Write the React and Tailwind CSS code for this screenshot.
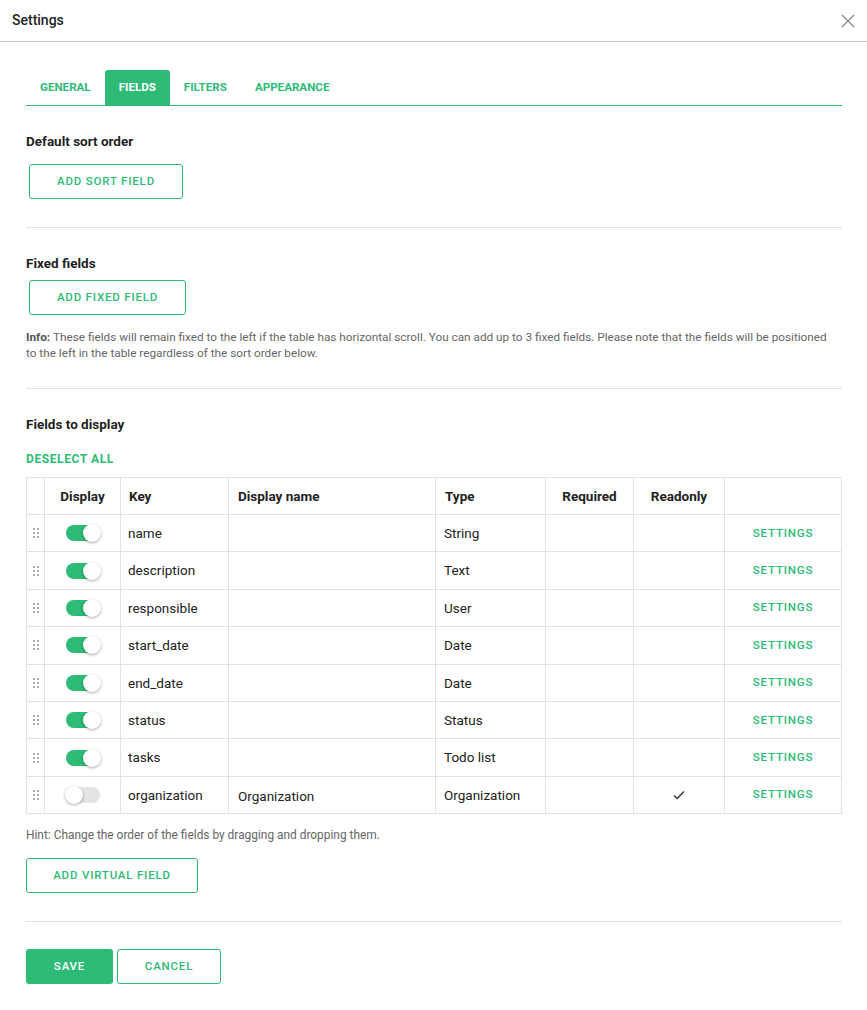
import { useState } from "react";

const fields = [
  { key: "name", display: "", type: "String", on: true },
  { key: "description", display: "", type: "Text", on: true },
  { key: "responsible", display: "", type: "User", on: true },
  { key: "start_date", display: "", type: "Date", on: true },
  { key: "end_date", display: "", type: "Date", on: true },
  { key: "status", display: "", type: "Status", on: true },
  { key: "tasks", display: "", type: "Todo list", on: true },
  { key: "organization", display: "Organization", type: "Organization", on: false, readonly: true },
];

function Toggle({ on, onClick }) {
  return (
    <button
      onClick={onClick}
      className={`relative h-[16px] w-[34px] rounded-full ${on ? "bg-[#2dbb76]" : "bg-[#e4e4e4]"}`}
    >
      <span
        className={`absolute top-[-1px] h-[18px] w-[18px] rounded-full bg-white shadow-[0_1px_3px_rgba(0,0,0,0.35)] ${on ? "right-[-1px]" : "left-[-1px]"}`}
      />
    </button>
  );
}

function DragHandle() {
  return (
    <div className="grid grid-cols-2 gap-x-[2px] gap-y-[2px] w-[6px] mx-auto">
      {Array.from({ length: 6 }).map((_, i) => (
        <span key={i} className="h-[2px] w-[2px] bg-[#aaaaaa]" />
      ))}
    </div>
  );
}

function OutlineButton({ children, className = "" }) {
  return (
    <button
      className={`h-[35px] rounded-[3px] border border-[#2dbb76] text-[11.5px] font-medium tracking-[0.07em] text-[#2dbb76] ${className}`}
    >
      {children}
    </button>
  );
}

export default function App() {
  const [rows, setRows] = useState(fields);
  const tabs = ["GENERAL", "FIELDS", "FILTERS", "APPEARANCE"];

  const toggle = (i) => {
    setRows(rows.map((r, idx) => (idx === i ? { ...r, on: !r.on } : r)));
  };

  return (
    <div className="min-h-screen bg-white font-['Roboto',sans-serif] text-[#222]">
      {/* cabecalho */}
      <div className="flex h-[42px] items-center justify-between border-b border-[#c6c6c6] pl-[12px] pr-[12px]">
        <span className="text-[14px] font-medium text-[#1f1f1f]">Settings</span>
        <svg width="14" height="14" viewBox="0 0 14 14" className="text-[#888]">
          <path d="M1 1L13 13M13 1L1 13" stroke="currentColor" strokeWidth="1.3" />
        </svg>
      </div>

      <div className="px-[26px] pr-[25px]">
        {/* abas */}
        <div className="mt-[28px] flex border-b border-[#2dbb76]">
          {tabs.map((t) => (
            <div
              key={t}
              className={`flex h-[35px] items-center px-[14px] pt-[1px] text-[11.6px] font-bold rounded-t-[3px] ${
                t === "FIELDS" ? "bg-[#2dbb76] text-white" : "text-[#2dbb76]"
              }`}
            >
              {t}
            </div>
          ))}
        </div>

        <h3 className="mt-[25px] text-[13.5px] font-bold leading-[20px] text-[#1f1f1f]">Default sort order</h3>
        <OutlineButton className="mt-[13px] ml-[3px] w-[154px] h-[34px]">ADD SORT FIELD</OutlineButton>

        <div className="mt-[28px] border-t border-[#e3e3e3]" />

        <h3 className="mt-[25px] text-[13.5px] font-bold leading-[20px] text-[#1f1f1f]">Fixed fields</h3>
        <OutlineButton className="mt-[7px] ml-[3px] w-[157px]">ADD FIXED FIELD</OutlineButton>
        <p className="mt-[14px] pr-[5px] text-[11.75px] leading-[16px] text-[#666]">
          <span className="font-bold text-[#555]">Info: </span>These fields will remain fixed to the left if the table has
          horizontal scroll. You can add up to 3 fixed fields. Please note that the fields will be positioned to the left
          in the table regardless of the sort order below.
        </p>

        <div className="mt-[27px] border-t border-[#e3e3e3]" />

        <h3 className="mt-[25px] text-[13.5px] font-bold leading-[20px] text-[#1f1f1f]">Fields to display</h3>
        <div className="mt-[17px] text-[12px] font-bold leading-[16px] tracking-[0.05em] text-[#2dbb76]">DESELECT ALL</div>

        <table className="mt-[10px] w-full border-collapse text-[13.5px]">
          <thead>
            <tr className="h-[37px]">
              <th className="w-[18px] border border-[#e2e2e2]" />
              <th className="w-[76px] border border-[#e2e2e2] font-bold text-center">Display</th>
              <th className="w-[108px] border border-[#e2e2e2] font-bold text-left px-[8px]">Key</th>
              <th className="w-[207px] border border-[#e2e2e2] font-bold text-left px-[9px]">Display name</th>
              <th className="w-[110px] border border-[#e2e2e2] font-bold text-left px-[9px]">Type</th>
              <th className="w-[88px] border border-[#e2e2e2] font-bold text-center">Required</th>
              <th className="w-[91px] border border-[#e2e2e2] font-bold text-center">Readonly</th>
              <th className="border border-[#e2e2e2]" />
            </tr>
          </thead>
          <tbody>
            {rows.map((r, i) => (
              <tr key={r.key} className="h-[37.4px]">
                <td className="border border-[#e2e2e2]">
                  <DragHandle />
                </td>
                <td className="border border-[#e2e2e2] text-center">
                  <div className="flex justify-center">
                    <Toggle on={r.on} onClick={() => toggle(i)} />
                  </div>
                </td>
                <td className="border border-[#e2e2e2] px-[7px]">{r.key}</td>
                <td className="border border-[#e2e2e2] px-[9px] pt-[2px]">{r.display}</td>
                <td className="border border-[#e2e2e2] px-[8px]">{r.type}</td>
                <td className="border border-[#e2e2e2]" />
                <td className="border border-[#e2e2e2] text-center">
                  {r.readonly && (
                    <svg width="12" height="10" viewBox="0 0 12 10" className="mx-auto">
                      <path d="M1 5.5L4.2 8.5L11 1.5" fill="none" stroke="#333" strokeWidth="1.4" />
                    </svg>
                  )}
                </td>
                <td className="border border-[#e2e2e2] text-center text-[11.5px] font-medium tracking-[0.07em] text-[#2dbb76]">
                  SETTINGS
                </td>
              </tr>
            ))}
          </tbody>
        </table>

        <p className="mt-[13px] text-[11.9px] leading-[16px] text-[#666]">
          Hint: Change the order of the fields by dragging and dropping them.
        </p>
        <OutlineButton className="mt-[15px] w-[172px]">ADD VIRTUAL FIELD</OutlineButton>

        <div className="mt-[28px] border-t border-[#e3e3e3]" />

        <div className="mt-[27px] flex gap-[4px] pb-[26px]">
          <button className="h-[35px] w-[87px] rounded-[3px] bg-[#2dbb76] text-[11.5px] font-medium tracking-[0.07em] text-white">
            SAVE
          </button>
          <OutlineButton className="w-[104px]">CANCEL</OutlineButton>
        </div>
      </div>
    </div>
  );
}
